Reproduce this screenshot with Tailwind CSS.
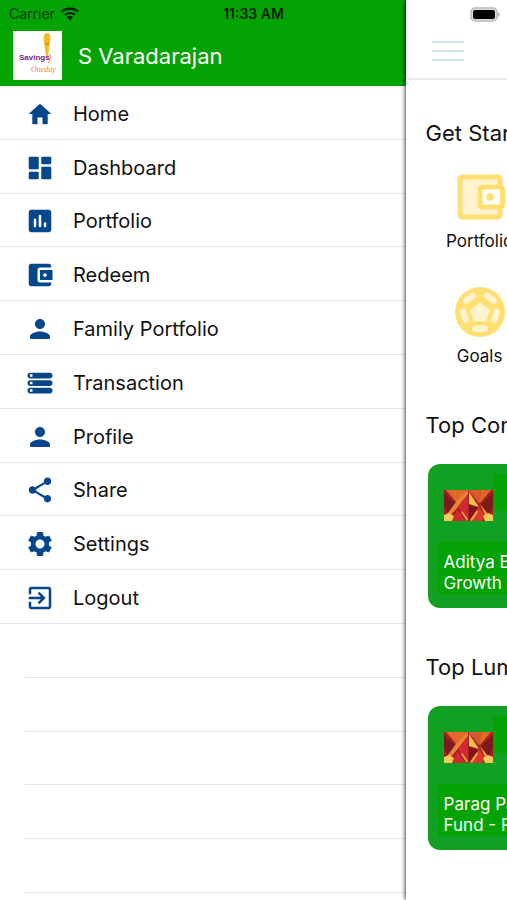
<!DOCTYPE html>
<html lang="en">
<head>
<meta charset="utf-8">
<meta name="viewport" content="width=device-width, initial-scale=1">
<title>Savings</title>
<script src="https://cdn.jsdelivr.net/npm/@tailwindcss/browser@4"></script>
</head>
<body class="bg-white font-[Inter,sans-serif] text-[#111]">
<svg class="hidden" aria-hidden="true">
  <symbol id="person" viewBox="0 0 24 24"><path d="M12 12c2.210 0 4-1.790 4-4s-1.790-4-4-4-4 1.790-4 4 1.790 4 4 4zm0 2c-2.670 0-8 1.340-8 4v1c0 .6.4 1 1 1h14c.6 0 1-.4 1-1v-1c0-2.660-5.330-4-8-4z"/></symbol>
  <symbol id="fund" viewBox="0 0 49 31" preserveAspectRatio="none">
    <path fill="#a81f20" d="M0 0h49v31H0z"/>
    <path fill="#e06a2c" d="M2 0h45L36 13 24 0 13 13z"/>
    <path fill="#7d1a1c" d="M0 3l12 11-8 10-4-8zM49 3L37 14l8 10 4-8z"/>
    <path fill="#ec8438" d="M12 12L24 0v4L12 19 5 27H1z"/>
    <path fill="#d8592c" d="M25 0h13l-3 14z"/>
    <path fill="#d02a30" d="M24 4v26l-10-13zM13 19l9 12H8z"/>
    <path fill="#f0c24c" d="M25 2l10 15-10-3z"/>
    <path fill="#7f151a" d="M25 15l9 3-9 12z"/>
    <path fill="#d8392c" d="M35 17l6 9-3 5H26z"/>
    <path fill="#f0a544" d="M26 30l7-10 1 2-6 9zM23 31l-6-9 1-1 6 8zM36 14l9 12-3 1z"/>
    <path fill="#f4c85a" d="M0 25l5-2 5 3-2 5H0zM49 25l-5-2-5 3 2 5h8z"/>
  </symbol>
</svg>
<div class="relative h-screen overflow-hidden">
  <div class="absolute inset-x-0 top-0 z-20 grid h-7 grid-cols-3 items-center text-sm">
    <div class="flex items-center gap-1.5 pl-[9px] text-[#063c06]">
      <span>Carrier</span>
      <svg class="h-[14px] w-[18px]" viewBox="0 0 18 14" fill="none" stroke="#052505" stroke-width="2.300" role="img" aria-label="Wi-Fi"><path d="M1 4.700c4.700-4.300 11.300-4.300 16 0M4 8c3-2.600 7-2.600 10 0"/><path fill="#052505" stroke="none" d="M6 10q3-2.400 6 0l-3 3.400z"/></svg>
    </div>
    <time class="text-center font-semibold text-[#052505]">11:33 AM</time>
    <svg class="mr-[6px] h-[15px] w-[31px] justify-self-end" viewBox="0 0 31 15" role="img" aria-label="Battery"><rect x="1" y="1" width="26" height="13" rx="4" fill="#ddd" stroke="#bbb" stroke-width="1.500"/><rect x="3" y="3" width="22" height="9" rx="2"/><path fill="#aaa" d="M28 5q3 2.500 0 5z"/></svg>
  </div>
  <div class="flex h-full">
    <aside class="flex w-4/5 shrink-0 flex-col bg-white">
      <header class="h-[86px] shrink-0 bg-[#04a304] pt-[31px]">
        <div class="flex items-center gap-4 pl-[13px]">
          <svg class="size-[49px] bg-white" viewBox="0 0 49 49" role="img" aria-label="Savings logo">
            <path fill="#f6bd1c" d="M34 2c-3 0-4 4-3 9l2 14h2l2-14c1-6 0-9-3-9z"/>
            <path fill="none" stroke="#b4761c" d="M32 12q2 3 4 0"/>
            <path fill="none" stroke="#f28334" d="M37 23q1 7-2 9"/>
            <text x="6" y="29" font-family="Liberation Sans" font-size="8" font-weight="700" fill="#7b238e">Savings</text>
            <text x="18" y="41" font-family="Liberation Serif" font-size="8" font-style="italic" fill="#f28334">Oneday</text>
          </svg>
          <h1 class="text-[22px] leading-7 text-white">S Varadarajan</h1>
        </div>
      </header>
      <nav class="text-[20px]">
        <ul class="grid h-[807px] auto-rows-fr [&_a]:flex [&_a]:h-full [&_a]:items-center [&_a]:gap-[18px] [&_a]:border-b [&_a]:border-[#e6e6e6] [&_a]:pt-[3px] [&_a]:pl-[25px] [&_svg]:size-[30px] [&_svg]:fill-[#06468a]">
          <li><a href="#"><svg viewBox="-28 -28 568 568"><path d="M208 448V320h96v110q0 18 18 18h62q18 0 18-18V256h50q18 0 5-13L268 72q-12-10-24 0L55 243q-13 13 5 13h50v174q0 18 18 18z"/></svg>Home</a></li>
          <li><a href="#"><svg viewBox="0 0 24 24"><rect x="3" y="3" width="8" height="10" rx=".8"/><rect x="3" y="15" width="8" height="6" rx=".8"/><rect x="13" y="3" width="8" height="6" rx=".8"/><rect x="13" y="11" width="8" height="10" rx=".8"/></svg>Dashboard</a></li>
          <li><a href="#"><svg viewBox="0 0 24 24"><path fill-rule="evenodd" d="M19 3H5c-1.100 0-2 .9-2 2v14c0 1.100.9 2 2 2h14c1.100 0 2-.9 2-2V5c0-1.100-.9-2-2-2zM8 17c-.55 0-1-.45-1-1v-5a1 1 0 012 0v5c0 .55-.45 1-1 1zm4 0c-.55 0-1-.45-1-1V8a1 1 0 012 0v8c0 .55-.45 1-1 1zm4 0c-.55 0-1-.45-1-1v-2a1 1 0 012 0v2c0 .55-.45 1-1 1z"/></svg>Portfolio</a></li>
          <li><a href="#"><svg viewBox="0 0 24 24"><path d="M21 18v1c0 1.100-.9 2-2 2H5c-1.110 0-2-.9-2-2V5c0-1.100.89-2 2-2h14c1.100 0 2 .9 2 2v1h-9c-1.110 0-2 .9-2 2v8c0 1.100.89 2 2 2h9zm-9-2h10V8H12v8zm4-2.500c-.83 0-1.500-.67-1.500-1.500s.67-1.500 1.500-1.500 1.500.67 1.500 1.500-.67 1.500-1.500 1.500z"/></svg>Redeem</a></li>
          <li><a href="#"><svg><use href="#person"/></svg>Family Portfolio</a></li>
          <li><a href="#"><svg viewBox="0 0 24 24"><path fill-rule="evenodd" d="M4.300 3.700h15.400a2.300 2.300 0 010 4.600H4.300a2.300 2.300 0 010-4.600zM4 5v2h2V5zM4.300 9.700h15.400a2.300 2.300 0 010 4.600H4.300a2.300 2.300 0 010-4.600zM4 11v2h2v-2zM4.300 15.700h15.400a2.300 2.300 0 010 4.600H4.300a2.300 2.300 0 010-4.600zM4 17v2h2v-2z"/></svg>Transaction</a></li>
          <li><a href="#"><svg><use href="#person"/></svg>Profile</a></li>
          <li><a href="#"><svg viewBox="0 0 24 24"><path d="M18 16.080c-.76 0-1.440.3-1.960.77L8.910 12.700c.05-.23.09-.46.09-.7s-.04-.47-.09-.7l7.050-4.110c.54.5 1.250.81 2.040.81 1.660 0 3-1.340 3-3s-1.340-3-3-3-3 1.340-3 3c0 .24.04.47.09.7L8.040 9.810C7.500 9.310 6.790 9 6 9c-1.660 0-3 1.340-3 3s1.340 3 3 3c.79 0 1.500-.31 2.040-.81l7.120 4.160c-.05.21-.08.43-.08.65 0 1.610 1.310 2.920 2.920 2.920s2.920-1.310 2.920-2.920-1.310-2.920-2.920-2.920z"/></svg>Share</a></li>
          <li><a href="#"><svg viewBox="0 0 24 24"><path d="M19.140 12.940c.04-.3.060-.61.060-.94 0-.32-.02-.64-.07-.94l2.030-1.580c.18-.14.230-.41.120-.61l-1.920-3.320c-.12-.22-.37-.29-.59-.22l-2.390.96c-.5-.38-1.030-.7-1.620-.94l-.36-2.540c-.04-.24-.24-.41-.48-.41h-3.840c-.24 0-.43.17-.47.41l-.36 2.540c-.59.24-1.130.57-1.620.94l-2.390-.96c-.22-.08-.47 0-.59.22L2.740 8.870c-.12.210-.08.470.12.610l2.030 1.580c-.05.3-.09.630-.09.940s.02.640.07.940l-2.030 1.580c-.18.140-.23.410-.12.610l1.920 3.320c.12.220.37.290.59.220l2.390-.96c.5.380 1.030.7 1.620.94l.36 2.540c.05.240.24.410.48.410h3.840c.24 0 .44-.17.47-.41l.36-2.540c.59-.24 1.130-.56 1.620-.94l2.390.96c.22.080.47 0 .59-.22l1.920-3.320c.12-.22.070-.47-.12-.61l-2.010-1.580zM12 15.600c-1.980 0-3.600-1.620-3.600-3.600s1.620-3.600 3.600-3.600 3.600 1.620 3.600 3.600-1.620 3.600-3.600 3.600z"/></svg>Settings</a></li>
          <li><a href="#"><svg viewBox="0 0 24 24"><path d="M10.090 15.590L11.500 17l5-5-5-5-1.410 1.410L12.670 11H3v2h9.670l-2.580 2.590zM19 3H5c-1.110 0-2 .9-2 2v4h2V5h14v14H5v-4H3v4c0 1.100.89 2 2 2h14c1.100 0 2-.9 2-2V5c0-1.100-.9-2-2-2z"/></svg>Logout</a></li>
          <li class="ml-[25px] border-b border-[#e6e6e6]"></li>
          <li class="ml-[25px] border-b border-[#e6e6e6]"></li>
          <li class="ml-[25px] border-b border-[#e6e6e6]"></li>
          <li class="ml-[25px] border-b border-[#e6e6e6]"></li>
          <li class="ml-[25px] border-b border-[#e6e6e6]"></li>
        </ul>
      </nav>
    </aside>
    <main class="z-10 min-w-0 flex-1 bg-white whitespace-nowrap shadow-[-1px_0_4px_rgba(0,0,0,0.7)]">
      <header class="flex h-[80px] items-end border-b-2 border-[#ececec] pb-4 pl-[26px]">
        <button type="button" aria-label="Menu" class="flex h-[22px] w-8 flex-col justify-between py-px"><span class="h-[2px] w-full bg-[#d3e1ec]"></span><span class="h-[2px] w-full bg-[#d3e1ec]"></span><span class="h-[2px] w-full bg-[#d3e1ec]"></span></button>
      </header>
      <div class="pt-[38px] pl-5">
        <h2 class="text-[22px] leading-[30px]">Get Started</h2>
        <div class="flex w-[108px] flex-col gap-[7px] pt-[19px] pb-[19px] text-[17px] leading-6">
          <a href="#" class="flex h-[108px] flex-col items-center">
            <svg class="size-[60px] shrink-0" viewBox="0 0 24 24"><path fill="#fff3cf" d="M5 5h14v2h-6c-1.100 0-2 .9-2 2v6c0 1.100.9 2 2 2h6v2H5z"/><path fill="#ffdf70" fill-rule="evenodd" d="M21 7.280V5c0-1.100-.9-2-2-2H5c-1.110 0-2 .9-2 2v14c0 1.100.89 2 2 2h14c1.100 0 2-.9 2-2v-2.280c.59-.35 1-.98 1-1.720V9c0-.74-.41-1.370-1-1.720zM20 9v6h-7V9h7zM5 19V5h14v2h-6c-1.100 0-2 .9-2 2v6c0 1.100.9 2 2 2h6v2H5z"/><circle cx="16" cy="12" r="1.500" fill="#ffdf70"/></svg>
            <span class="pt-[2px]">Portfolio</span>
          </a>
          <a href="#" class="flex h-[108px] flex-col items-center">
            <svg class="size-[60px] shrink-0" viewBox="0 0 24 24" fill="#fff3cf" stroke-linejoin="round"><circle cx="12" cy="12" r="10" fill="#ffdf70"/><path stroke="#fff3cf" d="M12 8.900l3.400 2.500-1.300 3.900H9.900l-1.300-3.900z"/><g stroke="#fff3cf" stroke-width="2.600" stroke-linecap="round" fill="none"><path d="M6.500 7.500l2.700-2M14.800 5.500l2.700 2M18.700 11.900l-1 3.200M5.300 11.900l1 3.200M10.100 18.700h3.800"/></g></svg>
            <span class="pt-[2px]">Goals</span>
          </a>
        </div>
        <section class="h-[242px] pt-[1px]">
          <h2 class="text-[22px] leading-[30px]">Top Consistent Funds</h2>
          <article class="mt-6 ml-[2px] flex h-[144px] w-[260px] flex-col justify-between rounded-xl bg-[#12a022] p-[10px]">
            <div class="flex"><svg class="mt-4 ml-[6px] h-[31px] w-[49px] shrink-0" role="img" aria-label="Fund logo"><use href="#fund"/></svg><div class="h-[37px] flex-1 bg-[#04a304]"></div></div>
            <p class="mb-1 bg-[#04a304] px-[6px] pt-[10px] text-[17px] leading-[21px] text-white">Aditya Birla Sun Life<br>Growth - Regular</p>
          </article>
        </section>
        <section class="h-[242px] pt-[1px]">
          <h2 class="text-[22px] leading-[30px]">Top Lumpsum Funds</h2>
          <article class="mt-6 ml-[2px] flex h-[144px] w-[260px] flex-col justify-between rounded-xl bg-[#12a022] p-[10px]">
            <div class="flex"><svg class="mt-4 ml-[6px] h-[31px] w-[49px] shrink-0" role="img" aria-label="Fund logo"><use href="#fund"/></svg><div class="h-[37px] flex-1 bg-[#04a304]"></div></div>
            <p class="mb-1 bg-[#04a304] px-[6px] pt-[10px] text-[17px] leading-[21px] text-white">Parag Parikh Flexi<br>Fund - Regular</p>
          </article>
        </section>
        <h2 class="text-[22px] leading-[30px]">Top SIP Funds</h2>
      </div>
    </main>
  </div>
</div>
</body>
</html>
